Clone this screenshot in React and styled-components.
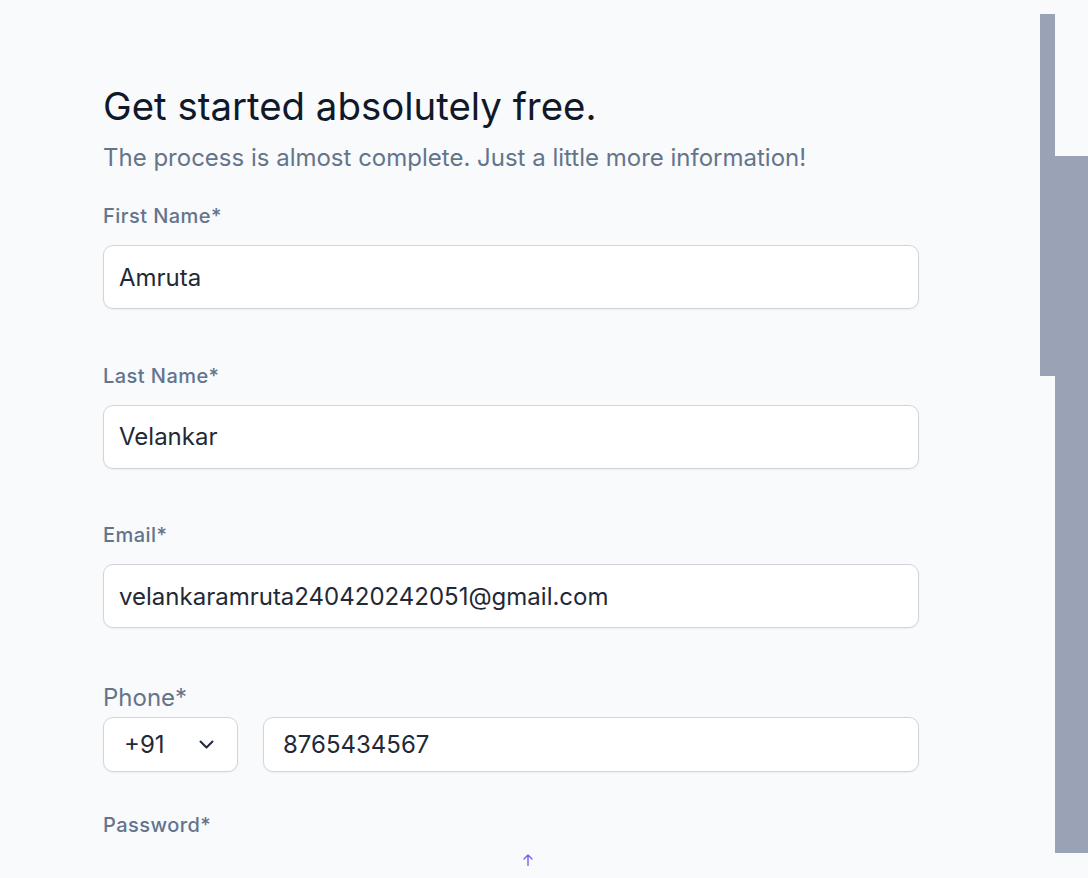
import React from 'react'
import styled, { createGlobalStyle } from 'styled-components';

const GlobalStyle = createGlobalStyle`
  html, body {
    margin: 0;
    padding: 0;
    background: #f8fafc;
    font-family: Inter, "Noto Sans", sans-serif;
    overflow: hidden;
  }
  * { box-sizing: border-box; }
`

const Chevron = () => (
  <svg width="15" height="9" viewBox="0 0 15 9" fill="none">
    <path d="M1.5 1.5l6 6 6-6" stroke="#1f2937" strokeWidth="2" strokeLinecap="round" strokeLinejoin="round" />
  </svg>
)

const ArrowUp = () => (
  <svg width="10" height="12" viewBox="0 0 10 12" fill="none">
    <path d="M5 11.5V1M1 5l4-4 4 4" stroke="#7c5cf0" strokeWidth="1.4" strokeLinecap="round" strokeLinejoin="round" />
  </svg>
)

const App = () => {
  return (
    <Page>
      <GlobalStyle />
      <FormSection>
        <Title>Get started absolutely free.</Title>
        <Subtitle>The process is almost complete. Just a little more information!</Subtitle>

        <Field>
          <Label>First Name*</Label>
          <Input defaultValue="Amruta" />
        </Field>
        <Field>
          <Label>Last Name*</Label>
          <Input defaultValue="Velankar" />
        </Field>
        <Field>
          <Label>Email*</Label>
          <Input defaultValue="velankaramruta240420242051@gmail.com" />
        </Field>

        <PhoneLabel>Phone*</PhoneLabel>
        <PhoneRow>
          <CodeSelect>
            <span>+91</span>
            <Chevron />
          </CodeSelect>
          <Input $short defaultValue="8765434567" />
        </PhoneRow>

        <Label>Password*</Label>
        <ScrollUp><ArrowUp /></ScrollUp>
      </FormSection>

      <Aside>
        <Bar $top={14} $width={15} $height={362} />
        <Bar $top={156} $width={33} $height={697} />
      </Aside>
    </Page>
  )
}
export default App;

const Page = styled.div`
  display: flex;
  width: 100%;
  min-height: 100vh;
`
const FormSection = styled.section`
  width: 919px;
  padding: 83px 0 0 103px;
  display: flex;
  flex-direction: column;
`
const Title = styled.h1`
  margin: 0;
  font-size: 38.4px;
  line-height: 46px;
  font-weight: 400;
  color: #111827;
`
const Subtitle = styled.p`
  margin: 13px 0 28px;
  font-size: 24px;
  line-height: 32px;
  color: #64748b;
`
const Field = styled.div`
  display: flex;
  flex-direction: column;
  margin-bottom: 52.5px;
`
const Label = styled.label`
  font-size: 20px;
  line-height: 28px;
  font-weight: 500;
  letter-spacing: 0.45px;
  color: #64748b;
  margin-bottom: 15px;
`
const PhoneLabel = styled.label`
  margin-top: 3px;
  font-size: 24px;
  line-height: 28px;
  color: #64748b;
`
const Input = styled.input`
  width: 100%;
  height: ${p => (p.$short ? '55px' : '64px')};
  padding: 0 ${p => (p.$short ? '19px' : '15px')};
  border: 1px solid #d1d5db;
  border-radius: 10px;
  background: #fff;
  font-family: Inter, "Noto Sans", sans-serif;
  font-size: 24px;
  color: #1f2937;
  box-shadow: 0 1px 2px rgba(15, 23, 42, 0.05);
  outline: none;
`
const PhoneRow = styled.div`
  display: flex;
  gap: 25px;
  margin: 5px 0 39px;
`
const CodeSelect = styled.div`
  flex: 0 0 135px;
  height: 55px;
  display: flex;
  align-items: center;
  justify-content: space-between;
  padding: 0 23px 0 20px;
  border: 1px solid #d1d5db;
  border-radius: 10px;
  background: #fff;
  font-size: 24px;
  color: #1f2937;
  box-shadow: 0 1px 2px rgba(15, 23, 42, 0.05);
`
const ScrollUp = styled.div`
  margin: 0 0 0 420px;
  display: flex;
`
const Aside = styled.aside`
  margin-left: auto;
  display: flex;
  align-items: flex-start;
`
const Bar = styled.div`
  width: ${p => p.$width}px;
  height: ${p => p.$height}px;
  margin-top: ${p => p.$top}px;
  background: #9aa3b5;
`
